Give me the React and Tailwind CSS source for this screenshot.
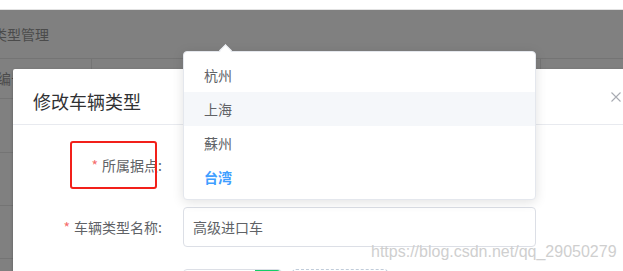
const cities = [
  { name: "杭州" },
  { name: "上海", hover: true },
  { name: "蘇州" },
  { name: "台湾", selected: true },
];

function BackgroundPage() {
  // page under the dialog mask, drawn in its masked colours
  return (
    <div className="flex h-full flex-col">
      <div className="h-[10px] shrink-0 border-b border-[#e2e2e2] bg-white" />
      <div className="flex-1 bg-[#808080] text-[14px] text-[#4b4b4b]">
        <div className="flex h-[49px] items-center border-b border-[#747474]">
          <span className="ml-[-7px]">类型管理</span>
        </div>
        <div className="flex h-[40px] border-b border-[#747474]">
          <div className="flex w-[92px] items-center border-r border-[#747474]">
            <span className="ml-[-3px]">编号</span>
          </div>
          <div className="w-[449px] border-r border-[#747474]" />
        </div>
        <div className="h-[54px] border-b border-[#747474]" />
        <div className="h-[53px] border-b border-[#747474]" />
        <div className="h-[53px] border-b border-[#747474]" />
      </div>
    </div>
  );
}

function FormRow({ label, children }) {
  return (
    <div className="mb-[22px] flex h-[40px] items-center">
      <label className="w-[150px] shrink-0 pr-[21px] text-right text-[14px] text-[#606266]">
        <span className="mr-[4px] text-[#f56c6c]">*</span>
        {label}
      </label>
      {children}
    </div>
  );
}

function EditDialog() {
  return (
    <div className="absolute left-[13px] top-[69px] h-[230px] w-[623px] rounded-[2px] bg-white shadow-[0_1px_3px_rgba(0,0,0,0.3)]">
      <div className="relative border-b border-[#e8eaef] px-5 pb-[10px] pt-5">
        <span className="text-[18px] leading-[24px] text-[#303133]">修改车辆类型</span>
        <button type="button" className="absolute right-[15px] top-[23px] h-[10px] w-[10px]">
          <svg viewBox="0 0 10 10" className="h-[10px] w-[10px]">
            <path d="M0.5 0.5 L9.5 9.5 M9.5 0.5 L0.5 9.5" stroke="#a8abb2" strokeWidth="1.1" fill="none" />
          </svg>
        </button>
      </div>

      <div className="px-5 pt-[20px]">
        <FormRow label="所属据点:">
          <div className="h-[40px] w-[353px] rounded-[4px] border border-[#dcdfe6]" />
        </FormRow>
        <FormRow label="车辆类型名称:">
          <div className="flex h-[40px] w-[353px] items-center rounded-[4px] border border-[#dcdfe6] pl-[9px] text-[14px] text-[#606266]">
            高级进口车
          </div>
        </FormRow>
        <div className="flex pl-[150px]">
          <div className="relative h-[30px] w-[99px] overflow-hidden rounded-[4px] border border-[#dcdfe6]">
            <div className="absolute right-0 top-0 h-full w-[26px] rounded-tr-[4px] bg-[#13ce66]" />
          </div>
          <div className="ml-[10px] h-[30px] w-[96px] rounded-[4px] border border-dashed border-[#c0ccda]" />
        </div>
      </div>
    </div>
  );
}

function CityDropdown() {
  return (
    <div className="absolute left-[183px] top-[51px] h-[149px] w-[353px] rounded-[4px] border border-[#e4e7ed] bg-white py-[6px] shadow-[0_2px_12px_rgba(0,0,0,0.12)]">
      <div className="absolute left-[37px] -top-[6px] h-[9px] w-[9px] rotate-45 border-l border-t border-[#e4e7ed] bg-white" />
      {cities.map((city) => (
        <div
          key={city.name}
          className={`h-[34px] px-5 text-[14px] leading-[34px] ${
            city.hover ? "bg-[#f5f7fa]" : ""
          } ${city.selected ? "font-bold text-[#409eff]" : "text-[#606266]"}`}
        >
          {city.name}
        </div>
      ))}
    </div>
  );
}

export default function App() {
  return (
    <div className="relative h-[271px] w-[623px] overflow-hidden bg-white font-['Noto_Sans_CJK_SC','Noto_Sans',sans-serif]">
      <BackgroundPage />
      <EditDialog />
      <CityDropdown />

      {/* annotation box */}
      <div className="absolute left-[70px] top-[141px] h-[48px] w-[87px] rounded-[3px] border-2 border-[#f2201a]" />

      {/* watermark */}
      <div className="absolute left-[371px] top-[244px] font-['Liberation_Sans',sans-serif] text-[16px] leading-[16px] text-[#cfcfcf]">
        https://blog.csdn.net/qq_29050279
      </div>
    </div>
  );
}
